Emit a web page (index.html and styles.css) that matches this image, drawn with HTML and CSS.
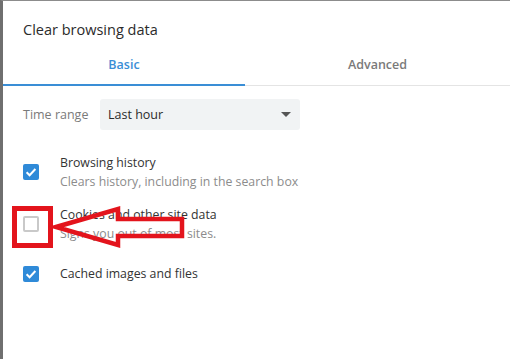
FILE: index.html
```html
<!DOCTYPE html>
<html lang="en">
<head>
  <meta charset="UTF-8" />
  <title>Clear browsing data</title>
  <link rel="stylesheet" href="styles.css">
</head>
<body>
  <div class="dialog">
    <div class="dialog-title">Clear browsing data</div>

    <div class="tabs">
      <div class="tab active">Basic</div>
      <div class="tab">Advanced</div>
    </div>

    <div class="time-row">
      <span class="time-label">Time range</span>
      <div class="select">
        <span>Last hour</span>
        <span class="caret"></span>
      </div>
    </div>

    <div class="option">
      <span class="check on">
        <svg viewBox="0 0 16 16" width="16" height="16"><path d="M3.6 8.2l3 3 5.8-6.2" fill="none" stroke="#fff" stroke-width="2"/></svg>
      </span>
      <div class="option-text">
        <div class="option-name">Browsing history</div>
        <div class="option-desc">Clears history, including in the search box</div>
      </div>
    </div>

    <div class="option">
      <span class="check"></span>
      <div class="option-text">
        <div class="option-name">Cookies and other site data</div>
        <div class="option-desc">Signs you out of most sites.</div>
      </div>
    </div>

    <div class="option single">
      <span class="check on">
        <svg viewBox="0 0 16 16" width="16" height="16"><path d="M3.6 8.2l3 3 5.8-6.2" fill="none" stroke="#fff" stroke-width="2"/></svg>
      </span>
      <div class="option-text">
        <div class="option-name">Cached images and files</div>
      </div>
    </div>
  </div>

  <!-- annotation drawn over the screenshot -->
  <svg class="markup" width="510" height="359" viewBox="0 0 510 359">
    <rect x="14.5" y="208.5" width="36" height="37" fill="none" stroke="#e3141c" stroke-width="5"/>
    <polygon points="56,227 118,209 118,219 182,219 182,236 118,236 118,245" fill="none" stroke="#e3141c" stroke-width="4.5" stroke-linejoin="miter"/>
  </svg>
</body>
</html>
```

FILE: styles.css
```css
* {
  box-sizing: border-box;
  margin: 0;
  padding: 0;
}

body {
  background: #fff;
  height: 100vh;
  overflow: hidden;
  position: relative;
  font-family: 'Open Sans', 'Noto Sans', sans-serif;
  color: #333;
}

.dialog {
  height: 100vh;
  border-left: 3px solid #6f6f6f;
  border-top: 1px solid #8c8c8c;
}

.dialog-title {
  padding: 18px 0 0 20px;
  font-size: 14.5px;
  line-height: 22px;
  color: #2b2b2b;
}

.tabs {
  display: flex;
  margin-top: 12px;
  border-bottom: 1px solid #e4e4e4;
}

.tab {
  flex: 1;
  text-align: center;
  font-size: 12.5px;
  font-weight: 600;
  line-height: 18px;
  padding: 3px 0 10px;
  color: #7a7a7a;
}

.tab.active {
  flex: 0 0 242px;
  color: #3a8ed6;
  border-bottom: 2px solid #3a8ed6;
  margin-bottom: -1px;
}

.time-row {
  display: flex;
  align-items: center;
  padding: 13px 0 0 20px;
}

.time-label {
  width: 77px;
  font-size: 12.5px;
  color: #7a7a7a;
}

.select {
  display: flex;
  align-items: center;
  justify-content: space-between;
  width: 200px;
  height: 31px;
  padding: 0 9px 0 8px;
  background: #f1f3f4;
  border-radius: 3px;
  font-size: 12.5px;
  color: #2b2b2b;
}

.caret {
  border-left: 5px solid transparent;
  border-right: 5px solid transparent;
  border-top: 5px solid #555;
}

.option {
  display: flex;
  align-items: center;
  padding: 23px 0 0 20px;
}

.option + .option {
  padding-top: 14px;
}

.option.single {
  padding-top: 21px;
}

.check {
  flex: 0 0 16px;
  width: 16px;
  height: 16px;
  border: 2px solid #c9c9c9;
  border-radius: 2px;
}

.check.on {
  background: #2f8ad8;
  border: none;
}

.check svg {
  display: block;
}

.option-text {
  margin-left: 21px;
  font-size: 12.3px;
  line-height: 19px;
}

.option-name {
  color: #333;
}

.option-desc {
  color: #8c8c8c;
}

.markup {
  position: absolute;
  top: 0;
  left: 0;
  pointer-events: none;
}
```
